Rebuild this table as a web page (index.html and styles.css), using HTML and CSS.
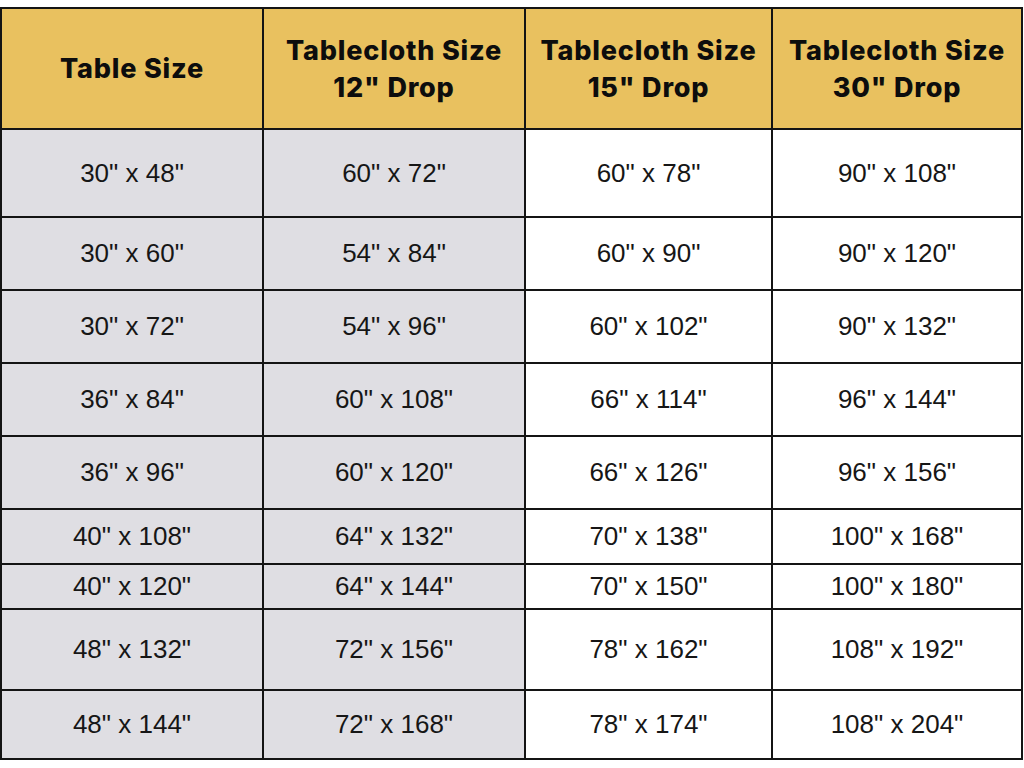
FILE: index.html
```html
<!DOCTYPE html>
<html lang="en">
<head>
<meta charset="utf-8">
<title>Tablecloth Size Chart</title>
<link rel="stylesheet" href="styles.css">
</head>
<body>
<div class="chart" role="table">
  <div class="cell head" role="columnheader">Table Size</div>
  <div class="cell head" role="columnheader">Tablecloth Size<br>12" Drop</div>
  <div class="cell head" role="columnheader">Tablecloth Size<br>15" Drop</div>
  <div class="cell head" role="columnheader">Tablecloth Size<br>30" Drop</div>

  <div class="cell grey">30" x 48"</div><div class="cell grey">60" x 72"</div><div class="cell">60" x 78"</div><div class="cell">90" x 108"</div>
  <div class="cell grey">30" x 60"</div><div class="cell grey">54" x 84"</div><div class="cell">60" x 90"</div><div class="cell">90" x 120"</div>
  <div class="cell grey">30" x 72"</div><div class="cell grey">54" x 96"</div><div class="cell">60" x 102"</div><div class="cell">90" x 132"</div>
  <div class="cell grey">36" x 84"</div><div class="cell grey">60" x 108"</div><div class="cell">66" x 114"</div><div class="cell">96" x 144"</div>
  <div class="cell grey">36" x 96"</div><div class="cell grey">60" x 120"</div><div class="cell">66" x 126"</div><div class="cell">96" x 156"</div>
  <div class="cell grey">40" x 108"</div><div class="cell grey">64" x 132"</div><div class="cell">70" x 138"</div><div class="cell">100" x 168"</div>
  <div class="cell grey">40" x 120"</div><div class="cell grey">64" x 144"</div><div class="cell">70" x 150"</div><div class="cell">100" x 180"</div>
  <div class="cell grey">48" x 132"</div><div class="cell grey">72" x 156"</div><div class="cell">78" x 162"</div><div class="cell">108" x 192"</div>
  <div class="cell grey">48" x 144"</div><div class="cell grey">72" x 168"</div><div class="cell">78" x 174"</div><div class="cell">108" x 204"</div>
</div>
</body>
</html>
```
FILE: styles.css
```css
html, body {
  margin: 0;
  padding: 0;
  background: #ffffff;
}

body {
  padding-top: 7px;
}

.chart {
  width: 1023px;
  box-sizing: border-box;
  display: grid;
  grid-template-columns: 260px 260px 245px 248px;
  grid-template-rows: 119px 86px 71px 71px 71px 71px 53px 43px 79px 67px;
  gap: 2px;
  padding: 2px;
  background: #141414;
}

.cell {
  display: flex;
  align-items: center;
  justify-content: center;
  text-align: center;
  background: #ffffff;
  color: #161616;
  font-family: "Liberation Sans", Arial, sans-serif;
  font-size: 26px;
}

.cell.grey {
  background: #dfdee3;
}

.cell.head {
  background: #e9c15f;
  color: #0d0d0d;
  font-family: Inter, "Noto Sans", sans-serif;
  font-weight: 800;
  font-size: 27px;
  letter-spacing: 0.8px;
  line-height: 37px;
}
```
